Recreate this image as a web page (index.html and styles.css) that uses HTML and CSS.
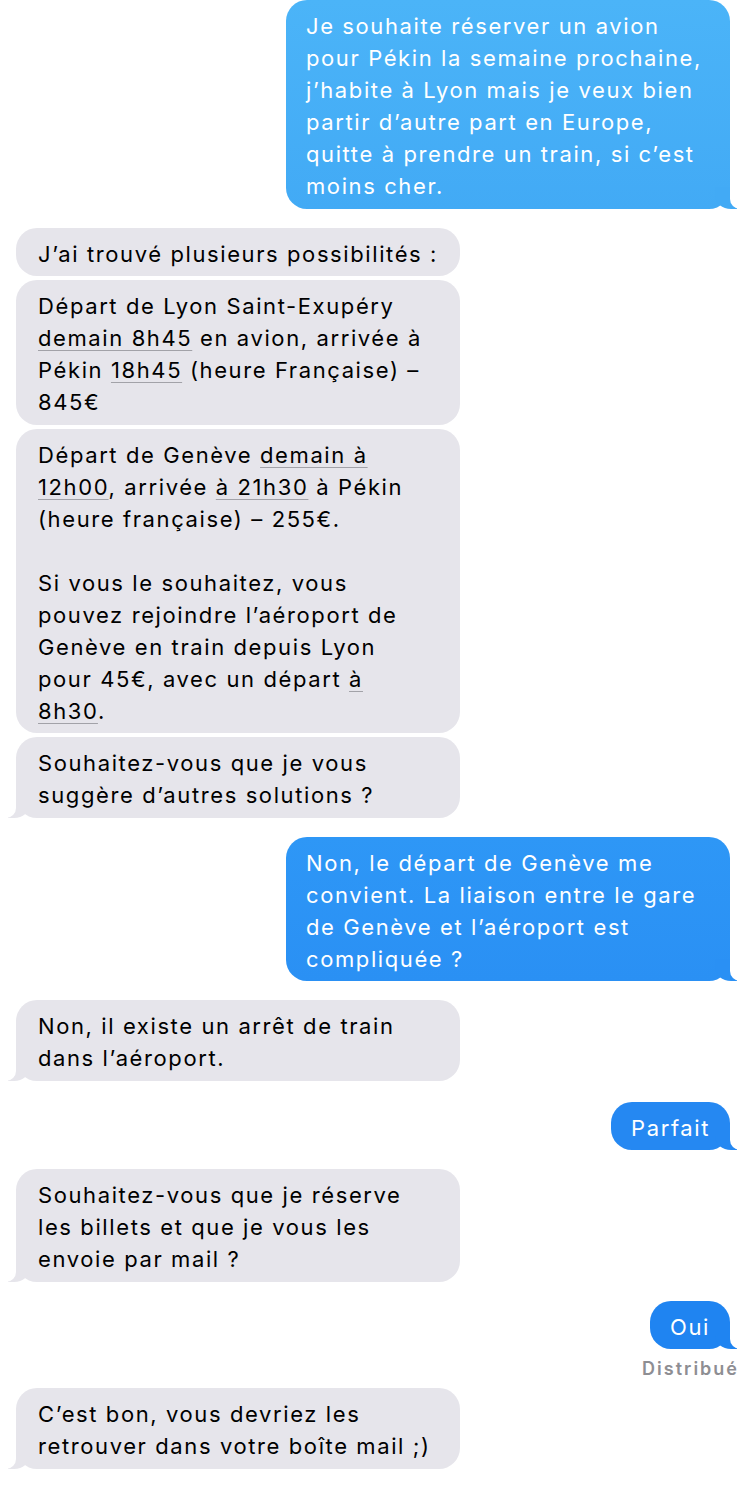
FILE: index.html
```html
<!DOCTYPE html>
<html lang="fr">
<head>
<meta charset="utf-8">
<title>Messages</title>
<link rel="stylesheet" href="styles.css">
</head>
<body>
<div class="thread">
  <div class="bubble out tail out-1 wide">Je souhaite réserver un avion<br>pour Pékin la semaine prochaine,<br>j’habite à Lyon mais je veux bien<br>partir d’autre part en Europe,<br>quitte à prendre un train, si c’est<br>moins cher.</div>

  <div class="bubble in group">J’ai trouvé plusieurs possibilités :</div>
  <div class="bubble in next wide">Départ de Lyon Saint-Exupéry<br><span class="u">demain 8h45</span> en avion, arrivée à<br>Pékin <span class="u">18h45</span> (heure Française) –<br>845€</div>
  <div class="bubble in next wide">Départ de Genève <span class="u">demain à</span><br><span class="u">12h00</span>, arrivée <span class="u">à 21h30</span> à Pékin<br>(heure française) – 255€.<br><br>Si vous le souhaitez, vous<br>pouvez rejoindre l’aéroport de<br>Genève en train depuis Lyon<br>pour 45€, avec un départ <span class="u">à</span><br><span class="u">8h30</span>.</div>
  <div class="bubble in next tail wide">Souhaitez-vous que je vous<br>suggère d’autres solutions ?</div>

  <div class="bubble out tail out-2 group wide">Non, le départ de Genève me<br>convient. La liaison entre le gare<br>de Genève et l’aéroport est<br>compliquée ?</div>

  <div class="bubble in tail group wide">Non, il existe un arrêt de train<br>dans l’aéroport.</div>

  <div class="bubble out tail out-3 group-lg">Parfait</div>

  <div class="bubble in tail group wide">Souhaitez-vous que je réserve<br>les billets et que je vous les<br>envoie par mail ?</div>

  <div class="bubble out tail out-4 group">Oui</div>
  <div class="status">Distribué</div>

  <div class="bubble in tail last wide">C’est bon, vous devriez les<br>retrouver dans votre boîte mail ;)</div>
</div>
</body>
</html>
```

FILE: styles.css
```css
* { box-sizing: border-box; }

html, body {
  margin: 0;
  padding: 0;
  background: #ffffff;
}

body {
  font-family: "Inter", "Noto Sans", sans-serif;
  font-size: 22px;
  letter-spacing: 1.6px;
  -webkit-font-smoothing: antialiased;
}

.thread {
  display: flex;
  flex-direction: column;
  padding: 0 24px 0 16px;
  width: 754px;
}

.bubble {
  position: relative;
  line-height: 32px;
  padding: 10px 22px 6.5px 22px;
  border-radius: 21px;
  max-width: 444px;
  white-space: nowrap;
}

.bubble.wide { width: 444px; }

.in {
  align-self: flex-start;
  background: #e6e5eb;
  color: #000;
  --c: #e6e5eb;
}

.out {
  align-self: flex-end;
  color: #fff;
  padding-left: 20px;
  padding-right: 20px;
}

.out-1 { background: linear-gradient(#4bb4f8, #42aaf5); --c: #42aaf5; }
.out-2 { background: linear-gradient(#2e97f6, #2a90f4); --c: #2a90f4; }
.out-3 { background: #2588f2; --c: #2588f2; }
.out-4 { background: #1f84f1; --c: #1f84f1; }

.group { margin-top: 19px; }
.group-lg { margin-top: 21px; }
.next { margin-top: 4px; }
.last { margin-top: 7px; }

.u {
  text-decoration: underline;
  text-decoration-color: #a2a2a8;
  text-decoration-thickness: 1px;
  text-underline-offset: 4px;
}

/* bubble tails */
.tail::before,
.tail::after {
  content: "";
  position: absolute;
  bottom: 0;
  height: 22px;
}

.out.tail::before {
  right: -7px;
  width: 22px;
  background: var(--c);
  border-bottom-left-radius: 16px 14px;
}
.out.tail::after {
  right: -26px;
  width: 26px;
  background: #fff;
  border-bottom-left-radius: 10px;
}

.in.tail::before {
  left: -8px;
  width: 22px;
  background: var(--c);
  border-bottom-right-radius: 16px 14px;
}
.in.tail::after {
  left: -26px;
  width: 26px;
  background: #fff;
  border-bottom-right-radius: 10px;
}

.status {
  align-self: flex-end;
  margin-right: -9px;
  margin-top: 8px;
  font-size: 18px;
  font-weight: 600;
  letter-spacing: 2px;
  line-height: 24px;
  color: #8e8e93;
}
```
